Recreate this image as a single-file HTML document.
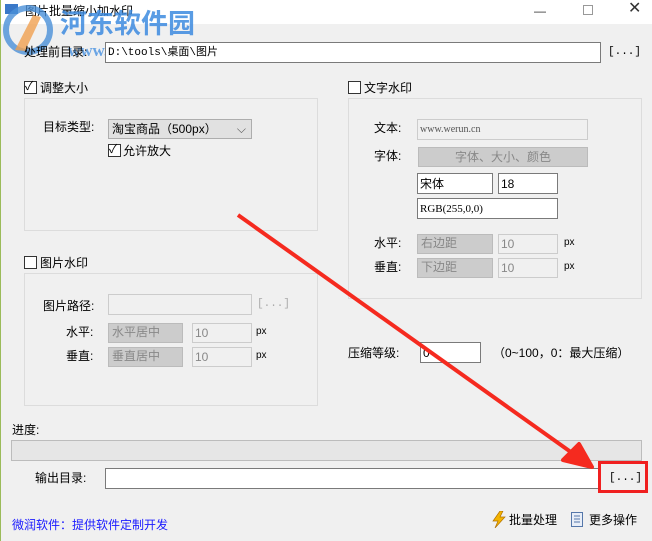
<!DOCTYPE html>
<html><head><meta charset="utf-8"><style>
*{margin:0;padding:0;box-sizing:border-box}
body{width:652px;height:541px;background:#f0f0f0;position:relative;overflow:hidden;font-family:"Liberation Sans","Noto Sans CJK SC",sans-serif;font-size:12px;color:#000}
.a{position:absolute;white-space:nowrap;line-height:14px}
.box{position:absolute;border:1px solid #7a7a7a;background:#fff}
.dis{position:absolute;border:1px solid #ccc;background:#f0f0f0;color:#888}
.sel{position:absolute;border:1px solid #bbb;background:#ccc;color:#888;padding-left:3px;line-height:17px}
.grp{position:absolute;border:1px solid #dcdcdc}
.cb{position:absolute;width:13px;height:13px;border:1px solid #333;background:#fff}
.mono{font-family:"Liberation Mono",monospace;font-size:11px}
</style></head><body>
<div style="position:absolute;left:0;top:0;width:652px;height:24px;background:#fff"></div>
<div style="position:absolute;left:0;top:0;width:1px;height:541px;background:#9bbb59"></div>
<div style="position:absolute;left:5px;top:4px;width:13px;height:10px;background:#3a78c8"></div>
<div class="a" style="left:25px;top:4px">图片批量缩小加水印</div>
<div class="a" style="left:534px;top:4px;color:#333">—</div>
<div style="position:absolute;left:583px;top:5px;width:10px;height:10px;border:1px solid #999"></div>
<div class="a" style="left:628px;top:2px;font-size:16px;color:#333">✕</div>
<svg style="position:absolute;left:3px;top:5px" width="56" height="50"><circle cx="25" cy="25" r="22" fill="none" stroke="#4a90d8" stroke-width="6" opacity=".8"/><path d="M12 45 L30 10 L38 12 L22 46Z" fill="#f0a050" opacity=".8"/></svg>
<div class="a" style="left:60px;top:8px;font-size:27px;line-height:32px;font-weight:bold;color:#3d8be0;opacity:.85">河东软件园</div>
<div class="a" style="left:68px;top:44px;font-size:17px;font-weight:bold;color:#3d8be0;opacity:.75;font-family:'Liberation Serif',serif">www.pc0359.cn</div>
<div class="a" style="left:24px;top:45px">处理前目录:</div>
<div class="box" style="left:105px;top:42px;width:496px;height:21px"><span class="a mono" style="left:2px;top:3px">D:\tools\桌面\图片</span></div>
<div class="a mono" style="left:608px;top:45px">[...]</div>

<div class="cb" style="left:24px;top:81px"></div><div class="a" style="left:25px;top:79px;font-size:12px">✓</div>
<div class="a" style="left:40px;top:81px">调整大小</div>
<div class="grp" style="left:24px;top:98px;width:294px;height:133px"></div>
<div class="a" style="left:43px;top:120px">目标类型:</div>
<div style="position:absolute;left:108px;top:119px;width:144px;height:20px;border:1px solid #adadad;background:#e1e1e1;padding-left:3px;line-height:18px">淘宝商品（500px）<span style="position:absolute;right:5px;top:0;color:#555">⌵</span></div>
<div class="cb" style="left:108px;top:144px"></div><div class="a" style="left:109px;top:142px">✓</div>
<div class="a" style="left:123px;top:144px">允许放大</div>

<div class="cb" style="left:348px;top:81px"></div>
<div class="a" style="left:364px;top:81px">文字水印</div>
<div class="grp" style="left:348px;top:98px;width:294px;height:201px"></div>
<div class="a" style="left:374px;top:121px">文本:</div>
<div class="dis" style="left:417px;top:119px;width:171px;height:21px"><span class="a" style="left:2px;top:3px;font-family:'Liberation Serif',serif;font-size:10px;color:#555">www.werun.cn</span></div>
<div class="a" style="left:374px;top:149px">字体:</div>
<div class="sel" style="left:418px;top:147px;width:170px;height:20px;text-align:center;padding:0;line-height:18px">字体、大小、颜色</div>
<div class="box" style="left:417px;top:173px;width:76px;height:21px"><span class="a" style="left:2px;top:3px">宋体</span></div>
<div class="box" style="left:498px;top:173px;width:60px;height:21px"><span class="a" style="left:2px;top:3px">18</span></div>
<div class="box" style="left:417px;top:198px;width:141px;height:21px"><span class="a" style="left:2px;top:3px;font-family:'Liberation Serif',serif;font-size:11px">RGB(255,0,0)</span></div>
<div class="a" style="left:374px;top:236px">水平:</div>
<div class="sel" style="left:417px;top:234px;width:76px;height:20px">右边距</div>
<div class="dis" style="left:498px;top:234px;width:60px;height:20px"><span class="a" style="left:2px;top:2px">10</span></div>
<div class="a" style="left:564px;top:236px;font-size:10px">px</div>
<div class="a" style="left:374px;top:260px">垂直:</div>
<div class="sel" style="left:417px;top:258px;width:76px;height:20px">下边距</div>
<div class="dis" style="left:498px;top:258px;width:60px;height:20px"><span class="a" style="left:2px;top:2px">10</span></div>
<div class="a" style="left:564px;top:260px;font-size:10px">px</div>

<div class="cb" style="left:24px;top:256px"></div>
<div class="a" style="left:40px;top:256px">图片水印</div>
<div class="grp" style="left:24px;top:273px;width:294px;height:133px"></div>
<div class="a" style="left:43px;top:299px">图片路径:</div>
<div class="dis" style="left:108px;top:294px;width:144px;height:21px"></div>
<div class="a mono" style="left:257px;top:297px;color:#aaa">[...]</div>
<div class="a" style="left:66px;top:325px">水平:</div>
<div class="sel" style="left:108px;top:323px;width:75px;height:20px">水平居中</div>
<div class="dis" style="left:192px;top:323px;width:60px;height:20px"><span class="a" style="left:2px;top:2px">10</span></div>
<div class="a" style="left:256px;top:325px;font-size:10px">px</div>
<div class="a" style="left:66px;top:349px">垂直:</div>
<div class="sel" style="left:108px;top:347px;width:75px;height:20px">垂直居中</div>
<div class="dis" style="left:192px;top:347px;width:60px;height:20px"><span class="a" style="left:2px;top:2px">10</span></div>
<div class="a" style="left:256px;top:349px;font-size:10px">px</div>

<div class="a" style="left:348px;top:346px">压缩等级:</div>
<div class="box" style="left:420px;top:342px;width:61px;height:21px"><span class="a" style="left:2px;top:3px">0</span></div>
<div class="a" style="left:493px;top:346px">（0~100，0：最大压缩）</div>

<div class="a" style="left:12px;top:423px">进度:</div>
<div style="position:absolute;left:11px;top:440px;width:631px;height:21px;border:1px solid #bcbcbc;background:#e6e6e6"></div>
<div class="a" style="left:35px;top:471px">输出目录:</div>
<div class="box" style="left:105px;top:468px;width:496px;height:21px"></div>
<div style="position:absolute;left:598px;top:461px;width:50px;height:32px;border:3px solid #f02020"></div>
<div class="a mono" style="left:609px;top:471px">[...]</div>

<div class="a" style="left:12px;top:518px;color:#1a1aff">微润软件：提供软件定制开发</div>
<svg style="position:absolute;left:492px;top:511px" width="14" height="17"><path d="M8 0 L1 10 L6 10 L3 17 L13 6 L8 6 L11 0Z" fill="#f4b400" stroke="#b07000" stroke-width=".7"/></svg>
<div class="a" style="left:509px;top:513px">批量处理</div>
<svg style="position:absolute;left:571px;top:512px" width="12" height="15"><rect x=".5" y=".5" width="11" height="14" fill="#e8eef8" stroke="#5577aa"/><path d="M3 4h6M3 7h6M3 10h6" stroke="#5577aa"/></svg>
<div class="a" style="left:589px;top:513px">更多操作</div>

<svg style="position:absolute;left:0;top:0" width="652" height="541"><line x1="238" y1="215" x2="575" y2="455" stroke="#f52a1f" stroke-width="4"/><path d="M592 467 L563 460 L579 444Z" fill="#f52a1f" stroke="#f52a1f" stroke-width="4" stroke-linejoin="round"/></svg>
</body></html>
